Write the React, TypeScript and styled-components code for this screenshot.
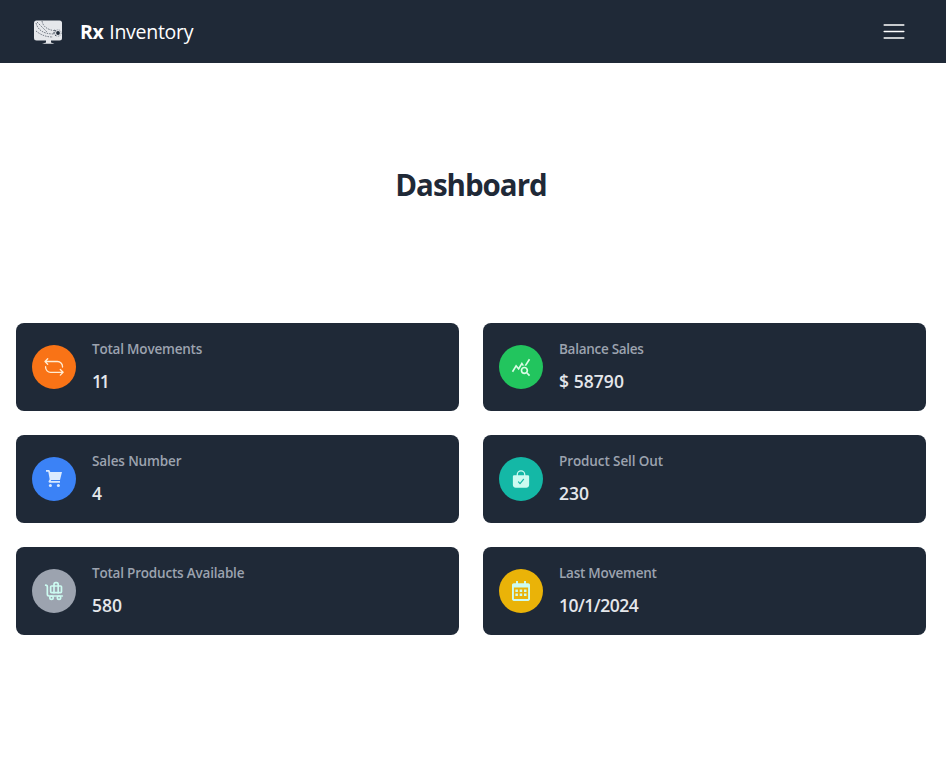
import React from "react";
import styled, { createGlobalStyle } from "styled-components";
import { MdQueryStats } from "react-icons/md";
import { IoBagCheck } from "react-icons/io5";
import { LuBaggageClaim } from "react-icons/lu";

const GlobalStyle = createGlobalStyle`
  *, *::before, *::after { box-sizing: border-box; }
  body {
    margin: 0;
    background: #fff;
    font-family: "Segoe UI", "Open Sans", "Noto Sans", sans-serif;
  }
  h1, p { margin: 0; }
`;

const Header = styled.header`
  display: flex;
  align-items: center;
  justify-content: space-between;
  height: 63px;
  padding: 0 36px 0 32px;
  background: #1f2937;
  color: #fff;
`;

const Brand = styled.div`
  display: flex;
  align-items: center;
  gap: 16px;
`;

const BrandName = styled.span`
  font-size: 19.5px;
  line-height: 28px;
  letter-spacing: -0.27px;
  word-spacing: 0.8px;
  white-space: nowrap;
  padding-top: 1px;
`;

const MenuButton = styled.button`
  display: flex;
  padding: 0;
  border: 0;
  background: none;
  color: #fff;
`;

const Title = styled.h1`
  padding: 103px 4px 120px 0;
  color: #1f2937;
  font-size: 29.5px;
  font-weight: 700;
  line-height: 37px;
  letter-spacing: -1px;
  text-align: center;
`;

const Stats = styled.main`
  display: grid;
  grid-template-columns: 1fr 1fr;
  gap: 24px;
  padding: 0 20px 0 16px;
`;

const Card = styled.section`
  display: flex;
  align-items: center;
  gap: 16px;
  height: 88px;
  padding: 16px;
  border-radius: 8px;
  background: #1f2937;
`;

const IconCircle = styled.div<{ $bg: string; $fg: string }>`
  display: flex;
  align-items: center;
  justify-content: center;
  flex: none;
  width: 44px;
  height: 44px;
  border-radius: 50%;
  background: ${(p) => p.$bg};
  color: ${(p) => p.$fg};
`;

const Label = styled.p<{ $spacing: number }>`
  margin-bottom: 8px;
  color: #9ca3af;
  font-size: 13.5px;
  font-weight: 600;
  line-height: 20px;
  letter-spacing: ${(p) => p.$spacing}px;
`;

const Value = styled.p<{ $spacing: number }>`
  color: #e5e7eb;
  font-size: 17.5px;
  font-weight: 600;
  line-height: 28px;
  letter-spacing: ${(p) => p.$spacing}px;
`;

const Logo = () => (
  <svg width="32" height="32" viewBox="0 0 32 32" fill="none">
    <rect x="2" y="4.5" width="28" height="20" rx="2.5" fill="#e5e7eb" />
    <path d="M14 24h5v2.500l3.500 1.300H10l4-1.300z" fill="#e5e7eb" />
    <g stroke="#374151" strokeWidth=".65" strokeDasharray="1.6 1">
      <path d="M4 7c2 7 7 11 18 11" />
      <path d="M10 5c1 6 6 9 14 10" />
      <path d="M4 15c5 4 10 6 17 6" />
      <path d="M5 6l10 10" />
    </g>
    <circle cx="26" cy="17" r="1.900" fill="#1f2937" />
    <circle cx="26" cy="17" r="3.200" stroke="#6b7280" strokeWidth=".8" strokeDasharray="1 1" />
    <path d="M22 14l2 1M21 17h2M23 20l1-1" stroke="#4b5563" />
  </svg>
);

type IconProps = { size: number };

const LoopIcon = ({ size }: IconProps) => (
  <svg width={size} height={size} viewBox="0 0 20 20" fill="none" stroke="currentColor" strokeWidth="1.300" strokeLinecap="round" strokeLinejoin="round">
    <path d="M3.700 1.700L1 4.500l2.700 2.800M1 4.500h12.500a5 5 0 0 1 5 5v.6" />
    <path d="M16.300 12.500l2.800 2.800-2.800 2.800M19 15.300H6.600a5 5 0 0 1-5-5v-.6" />
  </svg>
);

const CartIcon = ({ size }: IconProps) => (
  <svg width={size} height={size} viewBox="0 0 20 20" fill="currentColor">
    <path d="M2 1h3.300l1 2H18l-2 8H7.200l-.5 1H16v1.700H5.700c-1 0-1.500-.8-1-1.600l1-1.800L4.300 2.800H2z" />
    <circle cx="6.400" cy="16.400" r="1.500" />
    <circle cx="14.400" cy="16.400" r="1.500" />
  </svg>
);

const CalendarIcon = ({ size }: IconProps) => (
  <svg width={size} height={size} viewBox="0 0 20 20" fill="currentColor">
    <path fillRule="evenodd" d="M5 0h2v2.300h6V0h2v2.300h2.200c1 0 1.800.8 1.800 1.800v14c0 1-.8 1.800-1.800 1.800H2.800C1.800 19.900 1 19.100 1 18.100v-14c0-1 .8-1.800 1.800-1.800H5zM2.900 6.500V18h14.200V6.500z" />
    <path d="M4.400 8.600h2.500v2.500H4.400zm4.300 0h2.500v2.500H8.700zm4.300 0h2.500v2.500H13zM4.400 12.600h2.500v2.500H4.400zm4.300 0h2.500v2.500H8.700zm4.300 0h2.500v2.500H13z" />
  </svg>
);

const stats = [
  { label: "Total Movements", value: "11", icon: LoopIcon, bg: "#f97316", fg: "#ffedd5", ls: -0.2, vs: -2.2 },
  { label: "Balance Sales", value: "$ 58790", icon: MdQueryStats, bg: "#22c55e", fg: "#dcfce7", ls: -0.28, vs: 0.05 },
  { label: "Sales Number", value: "4", icon: CartIcon, bg: "#3b82f6", fg: "#dbeafe", ls: -0.12, vs: 0 },
  { label: "Product Sell Out", value: "230", icon: IoBagCheck, bg: "#14b8a6", fg: "#ccfbf1", ls: -0.1, vs: 0 },
  { label: "Total Products Available", value: "580", icon: LuBaggageClaim, bg: "#9ca3af", fg: "#ccfbf1", ls: -0.2, vs: 0 },
  { label: "Last Movement", value: "10/1/2024", icon: CalendarIcon, bg: "#eab308", fg: "#ccfbf1", ls: -0.25, vs: -0.5 },
];

export default function App() {
  return (
    <>
      <GlobalStyle />
      <Header>
        <Brand>
          <Logo />
          <BrandName><b>Rx</b> Inventory</BrandName>
        </Brand>
        <MenuButton aria-label="Menu">
          <svg width="32" height="32" viewBox="0 0 32 32" stroke="currentColor" strokeWidth="1.500" strokeLinecap="round">
            <path d="M6.200 9.100h19.600M6.200 15.500h19.600M6.200 21.900h19.600" />
          </svg>
        </MenuButton>
      </Header>
      <Title>Dashboard</Title>
      <Stats>
        {stats.map(({ label, value, icon: Icon, bg, fg, ls, vs }) => (
          <Card key={label}>
            <IconCircle $bg={bg} $fg={fg}><Icon size={20} /></IconCircle>
            <div>
              <Label $spacing={ls}>{label}</Label>
              <Value $spacing={vs}>{value}</Value>
            </div>
          </Card>
        ))}
      </Stats>
    </>
  );
}
